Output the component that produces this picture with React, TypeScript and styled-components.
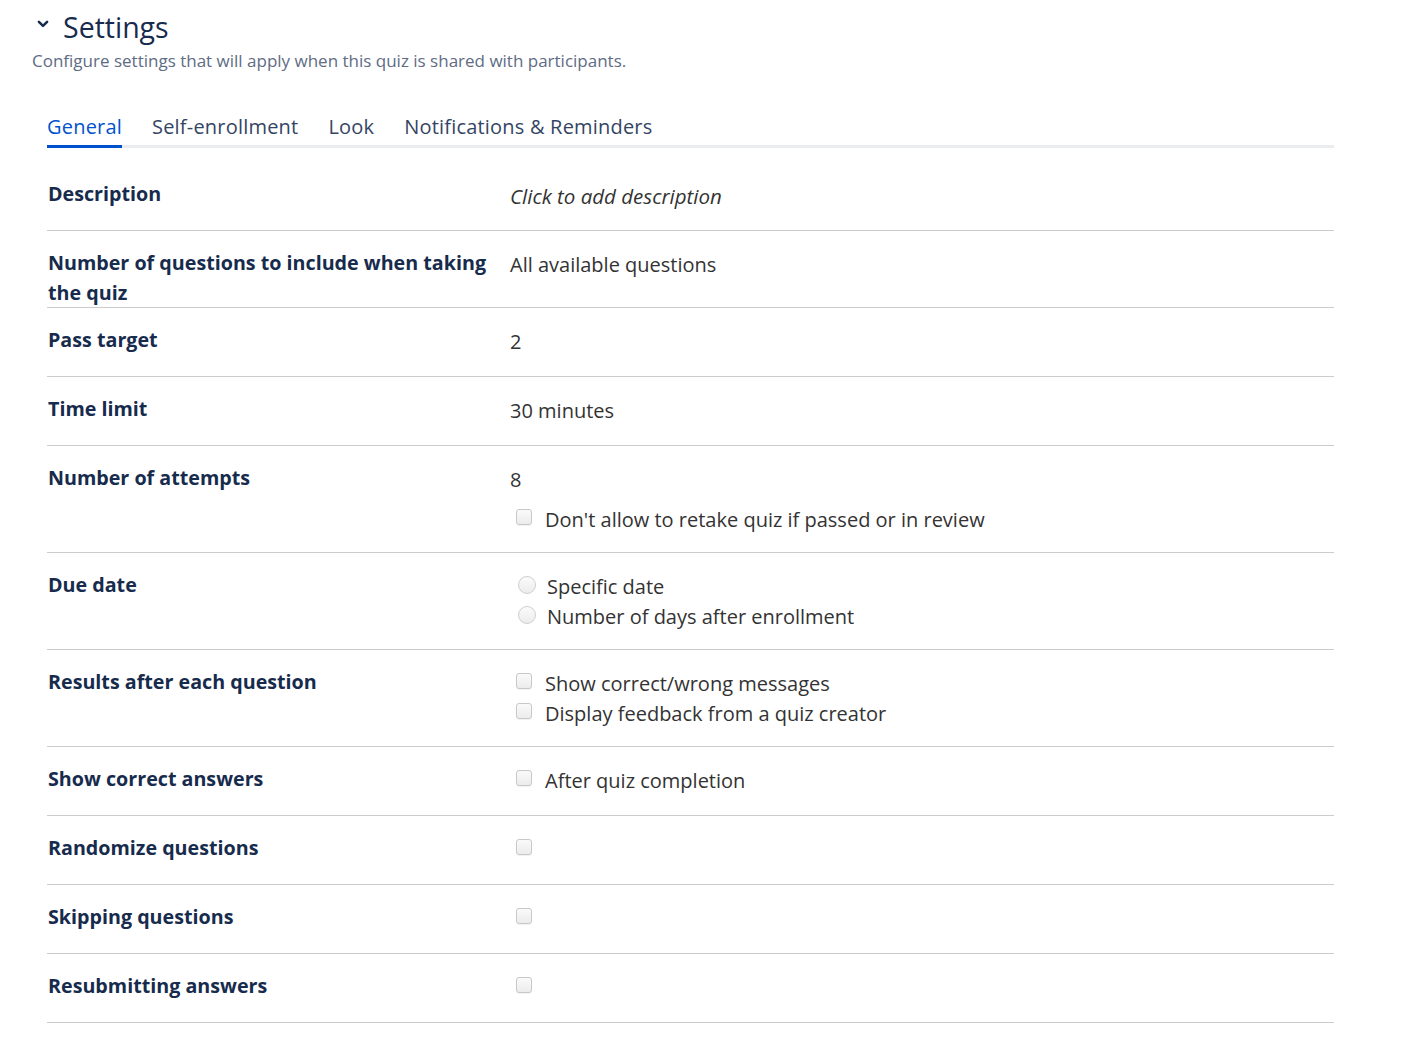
import React, { useState } from 'react';
import styled, { createGlobalStyle } from 'styled-components';

const GlobalStyle = createGlobalStyle`
    body {
        margin: 0;
        background: #ffffff;
        font-family: "Open Sans", "Noto Sans", Arial, sans-serif;
        color: #333333;
    }
`;

const tabs = ['General', 'Self-enrollment', 'Look', 'Notifications & Reminders'];

type Option = { kind: 'checkbox' | 'radio'; label?: string };

interface SettingRow {
    label: string;
    value?: string;
    italic?: boolean;
    options?: Option[];
}

const rows: SettingRow[] = [
    { label: 'Description', value: 'Click to add description', italic: true },
    { label: 'Number of questions to include when taking the quiz', value: 'All available questions' },
    { label: 'Pass target', value: '2' },
    { label: 'Time limit', value: '30 minutes' },
    {
        label: 'Number of attempts',
        value: '8',
        options: [{ kind: 'checkbox', label: "Don't allow to retake quiz if passed or in review" }],
    },
    {
        label: 'Due date',
        options: [
            { kind: 'radio', label: 'Specific date' },
            { kind: 'radio', label: 'Number of days after enrollment' },
        ],
    },
    {
        label: 'Results after each question',
        options: [
            { kind: 'checkbox', label: 'Show correct/wrong messages' },
            { kind: 'checkbox', label: 'Display feedback from a quiz creator' },
        ],
    },
    { label: 'Show correct answers', options: [{ kind: 'checkbox', label: 'After quiz completion' }] },
    { label: 'Randomize questions', options: [{ kind: 'checkbox' }] },
    { label: 'Skipping questions', options: [{ kind: 'checkbox' }] },
    { label: 'Resubmitting answers', options: [{ kind: 'checkbox' }] },
];

export default function App() {
    const [activeTab, setActiveTab] = useState(0);

    return (
        <Page>
            <GlobalStyle />
            <Header>
                <Chevron viewBox="0 0 12 12">
                    <path d="M2.5 4.2 L6 7.6 L9.5 4.2" fill="none" stroke="#172b4d" strokeWidth="2.2" strokeLinecap="round" strokeLinejoin="round" />
                </Chevron>
                <Title>Settings</Title>
            </Header>
            <Subtitle>Configure settings that will apply when this quiz is shared with participants.</Subtitle>

            <Content>
                <TabBar>
                    {tabs.map((tab, i) => (
                        <Tab key={tab} active={i === activeTab} onClick={() => setActiveTab(i)}>
                            {tab}
                        </Tab>
                    ))}
                </TabBar>

                <Panel>
                    {rows.map((row) => (
                        <Row key={row.label}>
                            <Label>{row.label}</Label>
                            <Value>
                                {row.value && <ValueText italic={row.italic}>{row.value}</ValueText>}
                                {row.options && (
                                    <OptionList spaced={!!row.value}>
                                        {row.options.map((opt, i) => (
                                            <OptionLine key={i}>
                                                {opt.kind === 'checkbox' ? <CheckBox /> : <Radio />}
                                                {opt.label && <OptionText radio={opt.kind === 'radio'}>{opt.label}</OptionText>}
                                            </OptionLine>
                                        ))}
                                    </OptionList>
                                )}
                            </Value>
                        </Row>
                    ))}
                </Panel>
            </Content>
        </Page>
    );
}

const Page = styled.div`
    padding: 6px 0 40px 32px;
    width: 1302px;
`;

const Header = styled.div`
    display: flex;
    align-items: center;
    gap: 13px;
    padding-left: 4px;
    height: 42px;
`;

const Chevron = styled.svg`
    width: 14px;
    height: 14px;
    margin-top: -6px;
`;

const Title = styled.h1`
    margin: 0;
    font-size: 28.5px;
    font-weight: 400;
    color: #172b4d;
    line-height: 42px;
`;

const Subtitle = styled.p`
    margin: 0;
    font-size: 17px;
    line-height: 26px;
    color: #5e6c84;
`;

const Content = styled.div`
    margin: 38px 0 0 15px;
`;

const TabBar = styled.div`
    display: flex;
    gap: 30px;
    border-bottom: 3px solid #ebecf0;
`;

const Tab = styled.div<{ active: boolean }>`
    font-size: 20px;
    letter-spacing: 0.2px;
    line-height: 30px;
    padding-bottom: 3px;
    margin-bottom: -3px;
    cursor: pointer;
    color: ${(props) => (props.active ? '#0052cc' : '#344563')};
    border-bottom: 3px solid ${(props) => (props.active ? '#0052cc' : 'transparent')};
`;

const Panel = styled.div`
    padding-top: 14px;
`;

const Row = styled.div`
    display: grid;
    grid-template-columns: 462px 1fr;
    min-height: 69px;
    box-sizing: border-box;
    padding: 17px 0 0 1px;
    border-bottom: 1px solid #cccccc;
`;

const Label = styled.div`
    font-size: 19.7px;
    font-weight: 700;
    line-height: 29.5px;
    color: #172b4d;
    padding-right: 14px;
`;

const Value = styled.div`
    padding: 2px 0 17px;
    font-size: 20px;
    line-height: 30px;
    color: #333333;
`;

const ValueText = styled.div<{ italic?: boolean }>`
    font-style: ${(props) => (props.italic ? 'italic' : 'normal')};
    font-size: ${(props) => (props.italic ? '20.5px' : '20px')};
`;

const OptionList = styled.div<{ spaced: boolean }>`
    margin-top: ${(props) => (props.spaced ? '10px' : '0')};
`;

const OptionLine = styled.div`
    display: flex;
    align-items: center;
    height: 30px;
    padding-left: 6px;
`;

const CheckBox = styled.span`
    display: inline-block;
    width: 14px;
    height: 14px;
    border: 1px solid #c8c8c8;
    border-radius: 3px;
    background: linear-gradient(#fafafa, #ececec);
    box-shadow: 0 1px 1px rgba(0, 0, 0, 0.06);
    margin-top: -6px;
`;

const Radio = styled.span`
    display: inline-block;
    width: 16px;
    height: 16px;
    border: 1px solid #cfcfcf;
    border-radius: 50%;
    background: linear-gradient(#fbfbfb, #ececec);
    margin-top: -4px;
    margin-left: 2px;
`;

const OptionText = styled.span<{ radio?: boolean }>`
    margin-left: ${(props) => (props.radio ? '11px' : '13px')};
`;
